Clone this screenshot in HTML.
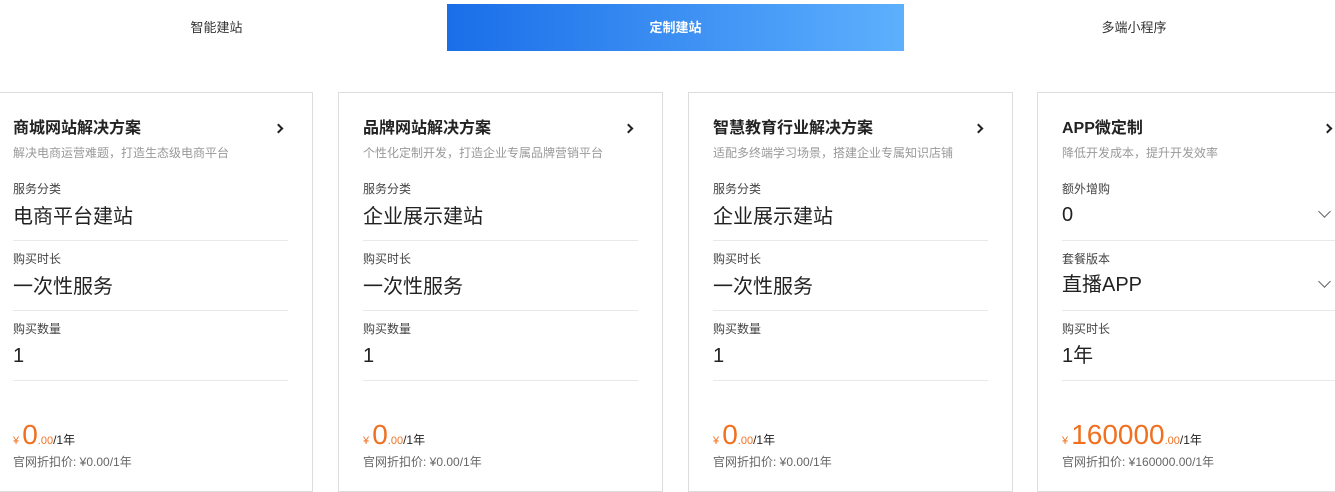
<!DOCTYPE html>
<html><head><meta charset="utf-8"><style>
*{margin:0;padding:0;box-sizing:border-box}
body{width:1335px;height:479px;overflow:hidden;background:#fff;font-family:"Liberation Sans","Noto Sans CJK SC",sans-serif;position:relative;color:#222}
.tab{position:absolute;top:4px;height:47px;line-height:47px;text-align:center;font-size:13px;color:#333}
.act{left:447px;width:457px;background:linear-gradient(90deg,#1a6ee8,#5db0fd);color:#fff;font-weight:bold}
.card{position:absolute;top:92px;width:325px;height:400px;border:1px solid #ddd}
.card div{line-height:1;white-space:nowrap}
.t{position:absolute;top:28px;left:24px;font-size:16px;font-weight:bold;color:#222}
.arr{position:absolute;top:32px;left:286px;width:7px;height:7px;border-right:2px solid #222;border-top:2px solid #222;transform:rotate(45deg)}
.s{position:absolute;top:54px;left:24px;font-size:12px;color:#999}
.l{position:absolute;left:24px;font-size:12px;color:#444}
.v{position:absolute;left:24px;font-size:20px;color:#222}
.d{position:absolute;left:24px;width:275px;height:1px;background:#e8e8e8}
.chev{position:absolute;left:282px;width:9px;height:9px;border-right:1px solid #666;border-bottom:1px solid #666;transform:rotate(45deg)}
.p{position:absolute;left:24px;top:328px;color:#f07020;font-size:11px}
.p b{font-size:28px;font-weight:normal}
.p i{font-style:normal;font-size:12px;color:#222}
.n{position:absolute;left:24px;top:363px;font-size:12px;color:#666}
</style></head><body>
<div class="tab" style="left:0;width:433px">智能建站</div>
<div class="tab act">定制建站</div>
<div class="tab" style="left:904px;width:460px">多端小程序</div>

<div class="card" style="left:-12px">
<div class="t">商城网站解决方案</div><div class="arr"></div>
<div class="s">解决电商运营难题，打造生态级电商平台</div>
<div class="l" style="top:90px">服务分类</div><div class="v" style="top:114px">电商平台建站</div><div class="d" style="top:147px"></div>
<div class="l" style="top:160px">购买时长</div><div class="v" style="top:184px">一次性服务</div><div class="d" style="top:217px"></div>
<div class="l" style="top:230px">购买数量</div><div class="v" style="top:253px">1</div><div class="d" style="top:287px"></div>
<div class="p">¥ <b>0</b>.00<i>/1年</i></div><div class="n">官网折扣价: ¥0.00/1年</div>
</div>

<div class="card" style="left:338px">
<div class="t">品牌网站解决方案</div><div class="arr"></div>
<div class="s">个性化定制开发，打造企业专属品牌营销平台</div>
<div class="l" style="top:90px">服务分类</div><div class="v" style="top:114px">企业展示建站</div><div class="d" style="top:147px"></div>
<div class="l" style="top:160px">购买时长</div><div class="v" style="top:184px">一次性服务</div><div class="d" style="top:217px"></div>
<div class="l" style="top:230px">购买数量</div><div class="v" style="top:253px">1</div><div class="d" style="top:287px"></div>
<div class="p">¥ <b>0</b>.00<i>/1年</i></div><div class="n">官网折扣价: ¥0.00/1年</div>
</div>

<div class="card" style="left:688px">
<div class="t">智慧教育行业解决方案</div><div class="arr"></div>
<div class="s">适配多终端学习场景，搭建企业专属知识店铺</div>
<div class="l" style="top:90px">服务分类</div><div class="v" style="top:114px">企业展示建站</div><div class="d" style="top:147px"></div>
<div class="l" style="top:160px">购买时长</div><div class="v" style="top:184px">一次性服务</div><div class="d" style="top:217px"></div>
<div class="l" style="top:230px">购买数量</div><div class="v" style="top:253px">1</div><div class="d" style="top:287px"></div>
<div class="p">¥ <b>0</b>.00<i>/1年</i></div><div class="n">官网折扣价: ¥0.00/1年</div>
</div>

<div class="card" style="left:1037px">
<div class="t">APP微定制</div><div class="arr"></div>
<div class="s">降低开发成本，提升开发效率</div>
<div class="l" style="top:90px">额外增购</div><div class="v" style="top:112px">0</div><div class="chev" style="top:114px"></div><div class="d" style="top:147px"></div>
<div class="l" style="top:160px">套餐版本</div><div class="v" style="top:182px">直播APP</div><div class="chev" style="top:184px"></div><div class="d" style="top:217px"></div>
<div class="l" style="top:230px">购买时长</div><div class="v" style="top:253px">1年</div><div class="d" style="top:287px"></div>
<div class="p">¥ <b>160000</b>.00<i>/1年</i></div><div class="n">官网折扣价: ¥160000.00/1年</div>
</div>
</body></html>
